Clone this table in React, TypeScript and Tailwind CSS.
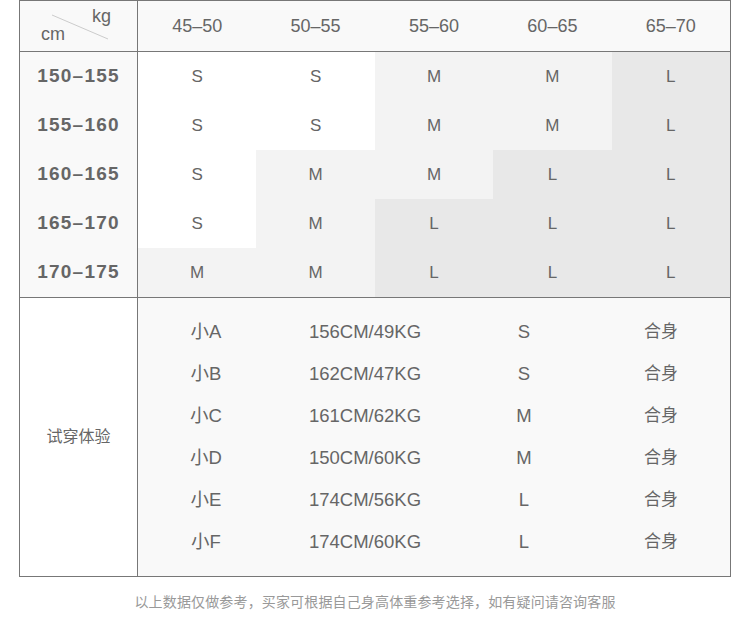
const weights = ['45–50', '50–55', '55–60', '60–65', '65–70'];

const rows: { h: string; cells: string[] }[] = [
  { h: '150–155', cells: ['S', 'S', 'M', 'M', 'L'] },
  { h: '155–160', cells: ['S', 'S', 'M', 'M', 'L'] },
  { h: '160–165', cells: ['S', 'M', 'M', 'L', 'L'] },
  { h: '165–170', cells: ['S', 'M', 'L', 'L', 'L'] },
  { h: '170–175', cells: ['M', 'M', 'L', 'L', 'L'] },
];

const trials = [
  ['小A', '156CM/49KG', 'S', '合身'],
  ['小B', '162CM/47KG', 'S', '合身'],
  ['小C', '161CM/62KG', 'M', '合身'],
  ['小D', '150CM/60KG', 'M', '合身'],
  ['小E', '174CM/56KG', 'L', '合身'],
  ['小F', '174CM/60KG', 'L', '合身'],
];

const sizeBg = (s: string) =>
  s === 'S' ? 'bg-white' : s === 'M' ? 'bg-[#f3f3f3]' : 'bg-[#e8e8e8]';

export default function App() {
  return (
    <div
      className="w-[750px] h-[617px] bg-white text-[#666]"
      style={{ fontFamily: '"Liberation Sans", Arial, "Noto Sans CJK SC", sans-serif' }}
    >
      <div className="ml-[19px] w-[712px] border border-[#777]">
        {/* size chart */}
        <div className="grid grid-cols-[118px_repeat(5,1fr)]">
          {/* header */}
          <div className="relative h-[51px] bg-[#f9f9f9] border-r border-b border-[#777]">
            <svg className="absolute left-0 top-0" width="117" height="50">
              <line x1="32" y1="14" x2="88" y2="38" stroke="#ccc" strokeWidth="1" />
            </svg>
            <span className="absolute left-[72px] top-[6px] text-[18px] leading-none">kg</span>
            <span className="absolute left-[21px] top-[24px] text-[18px] leading-none">cm</span>
          </div>
          {weights.map((w) => (
            <div
              key={w}
              className="h-[51px] bg-[#f9f9f9] border-b border-[#777] flex items-center justify-center text-[18px]"
            >
              {w}
            </div>
          ))}

          {rows.map((r, i) => (
            <div key={r.h} className="contents">
              <div
                className={`h-[49px] bg-[#f9f9f9] border-r border-[#777] flex items-center justify-center text-[19px] font-bold tracking-[1.2px] ${
                  i === rows.length - 1 ? 'h-[50px] border-b' : ''
                }`}
              >
                {r.h}
              </div>
              {r.cells.map((c, j) => (
                <div
                  key={j}
                  className={`h-[49px] flex items-center justify-center text-[17px] ${sizeBg(c)} ${
                    i === rows.length - 1 ? 'h-[50px] border-b border-[#777]' : ''
                  }`}
                >
                  {c}
                </div>
              ))}
            </div>
          ))}
        </div>

        {/* try-on */}
        <div className="flex h-[278px]">
          <div className="w-[118px] border-r border-[#777] bg-white flex items-center justify-center text-[16px]">
            试穿体验
          </div>
          <div className="flex-1 bg-[#f9f9f9] flex flex-col justify-center">
            {trials.map((t) => (
              <div key={t[0]} className="grid grid-cols-[136px_182px_136px_1fr] h-[42px] items-center text-[18.5px]">
                <span className="text-center">{t[0]}</span>
                <span className="text-center">{t[1]}</span>
                <span className="text-center">{t[2]}</span>
                <span className="text-center text-[17px]">{t[3]}</span>
              </div>
            ))}
          </div>
        </div>
      </div>

      <p className="mt-[15px] text-center text-[14px] tracking-[0.15px] text-[#999]">
        以上数据仅做参考，买家可根据自己身高体重参考选择，如有疑问请咨询客服
      </p>
    </div>
  );
}
